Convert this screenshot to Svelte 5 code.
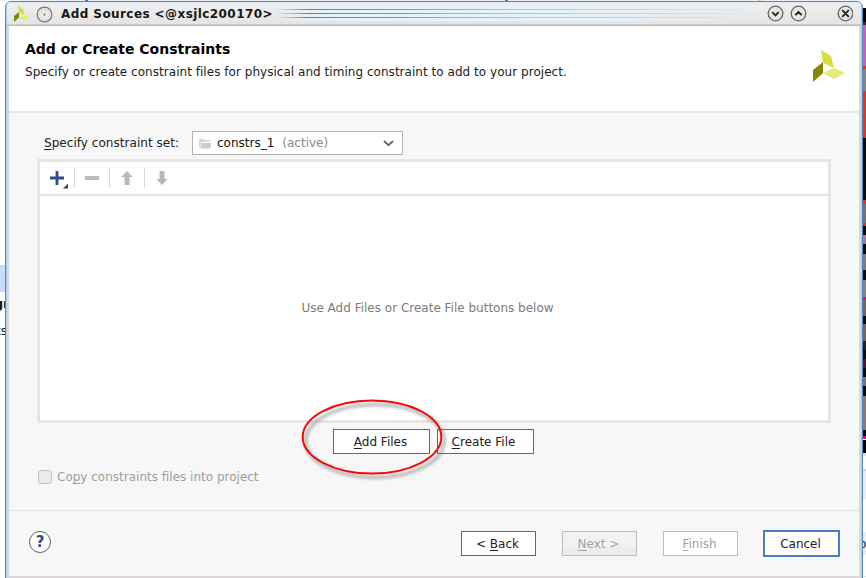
<script>
  const strip = [
    [0, 8, '#ffffff'], [8, 14, '#000000'], [22, 3, '#4b2034'], [25, 41, '#c565b8'], [66, 3, '#e03424'],
    [69, 22, '#858585'], [91, 47, '#e23424'], [138, 62, '#090d09'], [200, 4, '#e23424'], [204, 19, '#777272'],
    [223, 3, '#e23424'], [226, 9, '#090d09'], [235, 3, '#c565b8'], [238, 3, '#858585'], [241, 3, '#c565b8'],
    [244, 10, '#090d09'], [254, 16, '#7d7d7d'], [270, 10, '#090d09'], [280, 17, '#858585'], [297, 3, '#e0087a'],
    [300, 16, '#79655f'], [316, 8, '#090d09'], [324, 17, '#79655f'], [341, 9, '#26201d'], [350, 9, '#090d09'],
    [359, 9, '#54102c'], [368, 9, '#090d09'], [377, 9, '#777080'], [386, 10, '#090d09'], [396, 34, '#8f7872'],
    [430, 6, '#090d09'], [436, 3, '#e0087a'], [439, 1, '#ffffff'], [440, 13, '#000000'], [453, 3, '#dedede'],
    [456, 13, '#ffffff'], [469, 2, '#d0d0d0'], [471, 28, '#e9ecf1'], [499, 33, '#ffffff'], [532, 23, '#ededed'],
    [555, 21, '#ffffff'], [576, 1, '#dddddd'], [577, 1, '#ffffff']
  ];
</script>

{#snippet mark(size)}
  <svg class="mark" width={size} height={size} viewBox="0 0 32 32">
    <path d="M8 0 L18 6 L21 18 L10 13Z" fill="#d3e03d" />
    <path d="M0 20 L10 12 V23 L0 32Z" fill="#858706" />
    <path d="M10 23 L21 18 L32 23 L21 29Z" fill="#e2eb76" />
  </svg>
{/snippet}

<main>
  <div class="left-page">
    <i class="selection"></i><b class="frag">gr</b><span class="frag two">cts</span>
  </div>
  <div class="top-page"><i></i><i></i><i></i></div>
  <div class="right-page">
    {#each strip as [y, h, c]}<i style="height:{h}px;background:{c}"></i>{/each}
    <span>o</span>
  </div>

  <section class="window">
    <header class="titlebar">
      <div class="logo-sm">{@render mark(16)}</div>
      <svg class="pin" width="17" height="17" viewBox="0 0 17 17">
        <circle cx="8.5" cy="8.5" r="7.4" fill="#e9e9e9" stroke="#777" stroke-width="1.2" />
        <circle cx="8.5" cy="8.5" r="5.2" fill="none" stroke="#c9c9c9" stroke-dasharray="1 1" />
        <circle cx="8.5" cy="8.5" r="1" fill="#666" />
      </svg>
      <strong>Add Sources &lt;@xsjlc200170&gt;</strong>
      <div class="stripes"><i></i><i></i><i></i></div>
      <svg class="wctl" width="86" height="18" viewBox="0 0 86 18">
        <g fill="#e6e6e6" stroke="#666" stroke-width="1.3">
          <circle cx="8.5" cy="8.5" r="7.3" /><circle cx="31.5" cy="8.5" r="7.3" /><circle cx="78.5" cy="8.5" r="7.3" />
        </g>
        <path d="M5.3 7.2 L8.5 10.4 L11.7 7.2 M28.3 10.2 L31.5 7 L34.7 10.2 M75.2 5.2 L81.8 11.8 M81.8 5.2 L75.2 11.8" fill="none" stroke="#222" stroke-width="1.9" />
      </svg>
    </header>

    <div class="heading">
      <div class="words">
        <h1>Add or Create Constraints</h1>
        <p>Specify or create constraint files for physical and timing constraint to add to your project.</p>
      </div>
      <div class="logo">{@render mark(32)}</div>
    </div>

    <div class="body">
      <div class="setrow">
        <label for="set"><u>S</u>pecify constraint set:</label>
        <div class="combo" id="set">
          <svg width="13" height="11" viewBox="0 0 13 11">
            <path d="M0 9 V1 H5 L6 2 H11 V4 H3 L1 9Z" fill="#d8d8d8" />
            <path d="M3 5 H12.5 L11 10.5 H1Z" fill="#cacaca" />
          </svg>
          <span class="name">constrs_1</span><span class="active">(active)</span>
          <svg class="chev" width="11" height="7" viewBox="0 0 11 7"><path d="M1 1 L5.5 5.2 L10 1" fill="none" stroke="#6a6a6a" stroke-width="2" /></svg>
        </div>
      </div>

      <div class="panel">
        <div class="tools">
          <div class="tool"><svg width="20" height="20" viewBox="0 0 20 20"><path d="M5.6 3h2.8v5.6H14v2.8H8.4V17H5.6v-5.6H0V8.6h5.6z" fill="#2d4d87" /><path d="M18 15.5v5h-5z" fill="#444" /></svg></div>
          <div class="tool"><svg width="20" height="20" viewBox="0 0 20 20"><path d="M0 8h14v4H0z" fill="#bcbcbc" /></svg></div>
          <div class="tool"><svg width="20" height="20" viewBox="0 0 20 20"><path d="M7 3 L12.6 9 H9.5 V17 H4.5 V9 H1.4Z" fill="#b8b8b8" /></svg></div>
          <div class="tool"><svg width="20" height="20" viewBox="0 0 20 20"><path d="M4.5 3 H9.5 V11 H12.6 L7 17 L1.4 11 H4.5Z" fill="#b8b8b8" /></svg></div>
        </div>
        <div class="empty"><span>Use Add Files or Create File buttons below</span></div>
      </div>

      <div class="filebtns">
        <button><u>A</u>dd Files</button>
        <button class="create"><u>C</u>reate File</button>
      </div>

      <div class="copy"><i class="box"></i><span>Co<u>p</u>y constraints files into project</span></div>
    </div>

    <footer>
      <div class="help">?</div>
      <div class="nav">
        <button>&lt; <u>B</u>ack</button>
        <button class="off shade"><u>N</u>ext &gt;</button>
        <button class="off"><u>F</u>inish</button>
        <button class="focus">Cancel</button>
      </div>
    </footer>
  </section>

  <svg class="ring" width="160" height="100" viewBox="292 390 160 100">
    <ellipse class="shadow" cx="375" cy="441" rx="69.3" ry="36.5" />
    <ellipse cx="372" cy="437" rx="69.3" ry="36.5" fill="none" stroke="#f40b0b" stroke-width="2" />
  </svg>
</main>

<style>
  :global(body) { margin: 0; background: #fff; overflow: hidden; }
  * { box-sizing: border-box; }
  main { position: relative; width: 866px; height: 578px; overflow: hidden; background: #fff; font: 12px/16px 'DejaVu Sans', sans-serif; color: #222; }
  i { display: block; }
  u { text-decoration: underline; text-decoration-thickness: 1px; text-underline-offset: 2px; text-decoration-skip-ink: none; }

  .left-page { position: absolute; left: 0; top: 0; width: 5px; height: 578px; overflow: hidden; }
  .selection { position: absolute; top: 265px; width: 5px; height: 27px; background: #c9dcfc; }
  .frag { position: absolute; top: 296px; right: -4px; color: #111; }
  .frag.two { top: 323px; right: -2px; }
  .top-page { position: absolute; left: 0; top: 0; width: 866px; height: 1px; display: flex; background: #eef0f3; }
  .top-page i { width: 3px; margin-left: 85px; background: #3c70d0; }
  .top-page i + i { margin-left: 417px; }
  .top-page i + i + i { margin-left: 250px; background: #ccc; }
  .right-page { position: absolute; left: 863px; top: 0; width: 3px; height: 578px; overflow: hidden; }
  .right-page span { position: absolute; left: -4px; top: 536px; }

  .window { position: absolute; left: 5px; top: 1px; width: 858px; height: 578px; border: 1px solid #4f8bc5; border-radius: 6px 6px 0 0; background: #dbd7d8; box-shadow: inset 1px 0 #a9cdef, inset -1px 0 #a9cdef; padding: 0 3px; display: flex; flex-direction: column; overflow: hidden; }
  .titlebar { flex: none; height: 24px; margin: 0 -2px; padding: 0 8px 0 6px; display: flex; align-items: center; background: linear-gradient(#dcecf7 0, #eeeeee 3px, #e4e4e4 22px, #bdb9b5 23px); }
  .logo-sm { width: 16px; height: 16px; margin: 0 6px 0 1px; }
  .mark { display: block; }
  .pin { margin-right: 8px; }
  strong { font-size: 12px; letter-spacing: .42px; color: #181818; white-space: nowrap; width: 214px; }
  .stripes { flex: 1; height: 13px; padding-top: 1px; margin: 0 8px 0 0; display: flex; flex-direction: column; gap: 3px; background: linear-gradient(90deg, #e6f2fa00, #e6f2fa 10%, #e6f2fa 60%, #e6f2fa00); }
  .stripes i { height: 1px; background: linear-gradient(90deg, #5a94da00, #4a84cf 7%, #6c8fc0 16%, #5f9be0 25%, #86b2e4 36%, #b4c4d8 52%, #c8d0dc 75%, #c8d0dc00); }
  .wctl { flex: none; }

  .heading { flex: none; height: 87px; background: #fff; border-bottom: 2px solid #e7e7e7; display: flex; justify-content: space-between; padding: 15px 14px 0 16px; }
  h1 { margin: 0; font-size: 14px; line-height: 16px; color: #000; white-space: nowrap; }
  p { margin: 7px 0 0; white-space: nowrap; letter-spacing: .035px; }
  .logo { margin-top: 9px; }

  .body { flex: none; height: 397px; background: #f7f7f7; padding: 18px 28px 0; }
  .setrow { display: flex; align-items: center; height: 24px; padding-left: 7px; }
  label { width: 148px; white-space: nowrap; letter-spacing: .04px; }
  .combo { width: 211px; height: 24px; border: 1px solid #b5b5b5; background: #fff; display: flex; align-items: center; padding: 0 8px 0 6px; }
  .name { margin-left: 5px; color: #111; }
  .active { margin-left: 8px; color: #8b8b8b; }
  .chev { margin-left: auto; }
  .panel { width: 794px; height: 264px; margin-top: 4px; border: 3px solid #e6e6e6; background: #fff; display: flex; flex-direction: column; }
  .tools { height: 34px; border-bottom: 2px solid #e6e6e6; display: flex; align-items: center; }
  .tool { width: 35px; height: 20px; padding-left: 10px; border-right: 1px solid #dadada; }
  .tool svg { display: block; overflow: visible; }
  .tool:last-child { border: 0; }
  .empty { flex: 1; display: flex; align-items: center; justify-content: center; padding-right: 13px; color: #7b7b7b; }

  .filebtns { display: flex; gap: 7px; margin: 6px 0 0 296px; }
  button { font: inherit; color: #222; width: 97px; height: 25px; padding: 0 2px 0 0; border: 1px solid #686868; background: #fff; text-align: center; white-space: nowrap; }
  .create { padding-right: 4px; }
  .copy { display: flex; align-items: center; gap: 5px; margin: 15px 0 0 1px; color: #9d9d9d; }
  .box { width: 14px; height: 14px; border: 1px solid #c1c1c1; border-radius: 3px; background: #ebebef; }

  footer { flex: none; height: 66px; border-top: 1px solid #e3e3e3; background: #f7f7f7; display: flex; justify-content: space-between; padding: 19px 19px 0 20px; }
  .help { width: 22px; height: 22px; margin-top: 1px; border: 1px solid #606060; border-radius: 50%; background: #fff; font-size: 15px; font-weight: bold; line-height: 20px; text-align: center; color: #2e4c87; }
  .nav { display: flex; align-items: flex-start; }
  .nav button { width: 75px; margin: 1px 0 0 26px; }
  .nav .off { border-color: #bdbdbd; color: #a1a1a1; }
  .nav .shade { background: linear-gradient(#f2f2f2 65%, #ededed 65%); }
  .nav .focus { width: 77px; height: 27px; margin: 0 0 0 25px; border: 2px solid #4a7bc8; }

  .ring { position: absolute; left: 292px; top: 390px; }
  .shadow { fill: none; stroke: #777; stroke-opacity: .5; stroke-width: 3.5; filter: blur(1.6px); }
</style>
